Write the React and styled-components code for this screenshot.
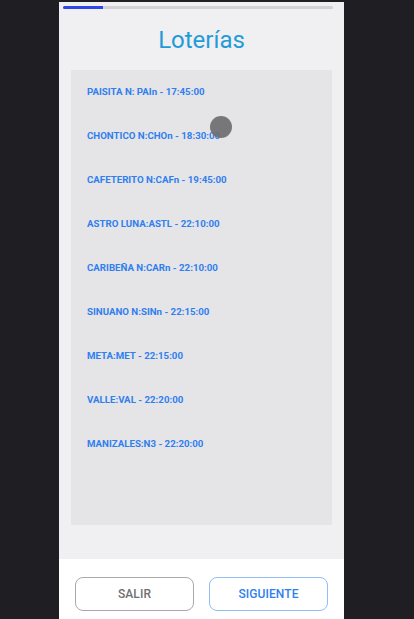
import React from 'react'
import styled, { createGlobalStyle } from 'styled-components'

const GlobalStyle = createGlobalStyle`
  html, body {
    margin: 0;
    padding: 0;
    background: #1f1e22;
    font-family: Roboto, "Noto Sans", Arial, sans-serif;
  }
`

const lotteries = [
  'PAISITA N: PAIn - 17:45:00',
  'CHONTICO N:CHOn - 18:30:00',
  'CAFETERITO N:CAFn - 19:45:00',
  'ASTRO LUNA:ASTL - 22:10:00',
  'CARIBEÑA N:CARn - 22:10:00',
  'SINUANO N:SINn - 22:15:00',
  'META:MET - 22:15:00',
  'VALLE:VAL - 22:20:00',
  'MANIZALES:N3 - 22:20:00',
]

const Screen = styled.div`
  width: 414px;
  height: 619px;
  display: flex;
  justify-content: flex-start;
  overflow: hidden;
  background: #1f1e22;
`

const Phone = styled.div`
  position: relative;
  margin: 2px 0 0 59px;
  width: 285px;
  height: 617px;
  display: flex;
  flex-direction: column;
  background: #f0eff2;
`

const Progress = styled.div`
  margin: 4px 11px 0 4px;
  height: 3px;
  background: #d2d1d4;
  border-radius: 2px;
  overflow: hidden;
`

const ProgressFill = styled.div`
  height: 100%;
  background: #2f47e6;
`

const Title = styled.h1`
  margin: 15px 0 0;
  text-align: center;
  font-size: 24px;
  font-weight: 400;
  line-height: 32px;
  color: #1f9bd7;
`

const ListBox = styled.div`
  margin: 14px 12px 0 12px;
  height: 455px;
  background: #e5e4e7;
  padding: 15px 16px 0;
  box-sizing: border-box;
  display: flex;
  flex-direction: column;
  gap: 30px;
`

const Item = styled.div`
  font-size: 9.7px;
  font-weight: 700;
  line-height: 14px;
  color: #2f7fef;
`

const Footer = styled.div`
  margin-top: auto;
  height: 60px;
  background: #ffffff;
  display: flex;
  align-items: flex-start;
  justify-content: space-between;
  padding: 18px 16px 0;
  box-sizing: border-box;
`

const Button = styled.button`
  width: 119px;
  height: 34px;
  border-radius: 8px;
  background: #ffffff;
  border: 1px solid ${p => (p.$primary ? '#8fbdf5' : '#a9a9ab')};
  color: ${p => (p.$primary ? '#2f7fef' : '#6f6f72')};
  font-family: Roboto, Arial, sans-serif;
  font-size: 12px;
  font-weight: 500;
  letter-spacing: 0.1px;
`

const Touch = styled.div`
  position: absolute;
  left: 151px;
  top: 114px;
  width: 22px;
  height: 22px;
  border-radius: 50%;
  background: rgba(110, 110, 112, 0.92);
`

export default function App() {
  const step = 40 / 270
  return (
    <Screen>
      <GlobalStyle />
      <Phone>
        <Progress>
          <ProgressFill style={{ width: `${step * 100}%` }} />
        </Progress>
        <Title>Loterías</Title>
        <ListBox>
          {lotteries.map(l => (
            <Item key={l}>{l}</Item>
          ))}
        </ListBox>
        <Footer>
          <Button>SALIR</Button>
          <Button $primary>SIGUIENTE</Button>
        </Footer>
        <Touch />
      </Phone>
    </Screen>
  )
}
